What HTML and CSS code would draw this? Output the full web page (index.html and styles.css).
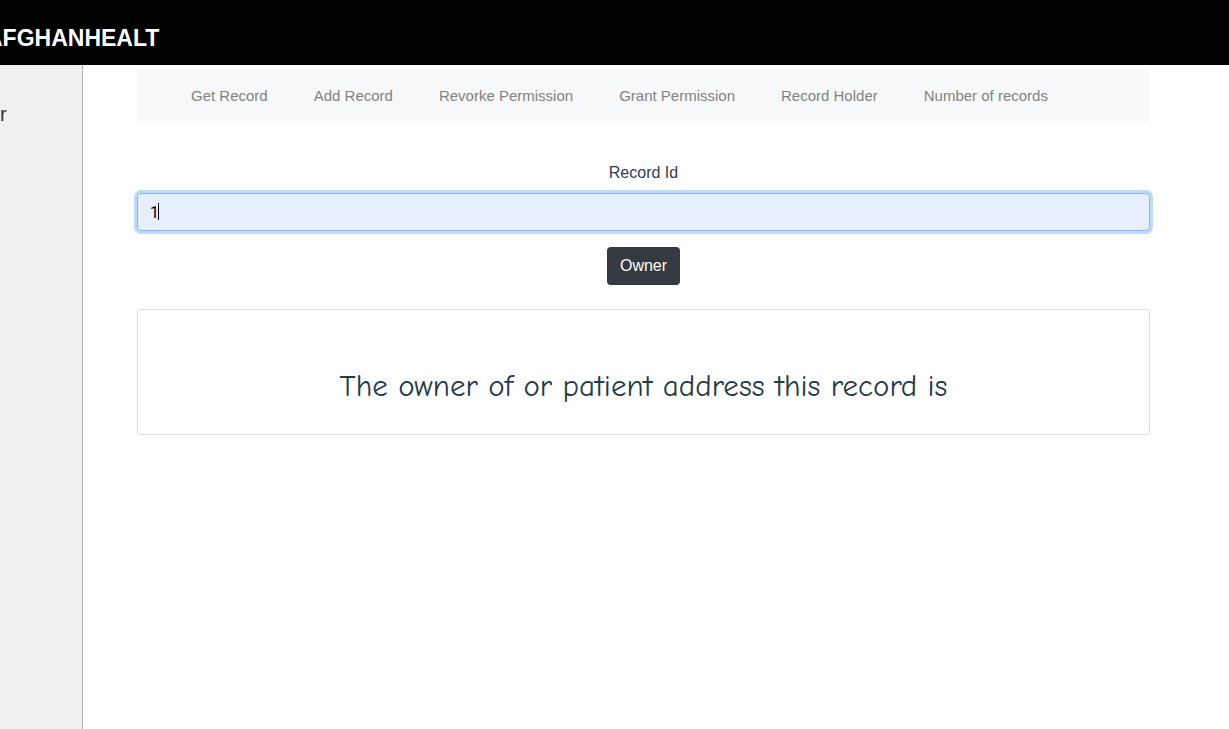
FILE: index.html
```html
<!DOCTYPE html>
<html lang="en">
<head>
<meta charset="utf-8">
<title>AFGHANHEALT</title>
<link rel="stylesheet" href="styles.css">
</head>
<body>
<header class="topbar"><span class="brand">AFGHANHEALT</span></header>
<div class="shell">
<aside class="sidebar"><span class="side-item">r</span></aside>
<main class="content">
<nav class="tabs">
<a href="#">Get Record</a>
<a href="#">Add Record</a>
<a href="#">Revorke Permission</a>
<a href="#">Grant Permission</a>
<a href="#">Record Holder</a>
<a href="#">Number of records</a>
</nav>
<form class="form">
<label for="record">Record Id</label>
<div class="field-wrap">
<input id="record" class="field" type="text" value="1">
<span class="caret"></span>
</div>
<button class="submit" type="button">Owner</button>
</form>
<section class="card"><p class="message">The owner of or patient address this record is</p></section>
</main>
</div>
</body>
</html>
```
FILE: styles.css
```css
* { box-sizing: border-box; }
body {
  margin: 0;
  min-height: 100vh;
  display: flex;
  flex-direction: column;
  overflow-x: hidden;
  background: #fff;
  color: #2c3e50;
  font: 16px/24px "Liberation Sans", Arial, sans-serif;
}
.topbar {
  display: flex;
  align-items: center;
  height: 65px;
  padding-top: 10px;
  background: #000;
  color: #fff;
}
.brand { margin-left: -14px; font-size: 23px; font-weight: 700; }
.shell { flex: 1; display: flex; }
.sidebar {
  flex: 0 0 83px;
  padding-top: 37px;
  background: #f1f1f1;
  border-right: 1px solid #b4b4b4;
  color: #333;
  font-size: 20px;
}
.content { flex: 1; padding: 4px 79px 0 54px; }
.tabs {
  display: flex;
  gap: 46px;
  height: 54px;
  padding: 0 54px;
  align-items: center;
  background: #f8f9fa;
  font-size: 15px;
}
.tabs a { color: #808284; text-decoration: none; white-space: nowrap; }
.form {
  display: flex;
  flex-direction: column;
  align-items: center;
  padding-top: 38px;
}
.field-wrap { position: relative; width: 100%; margin: 8px 0 16px; }
.field {
  display: block;
  width: 100%;
  height: 38px;
  padding: 6px 12px;
  border: 1px solid #80b9e8;
  border-radius: 4px;
  outline: 0;
  background: #e6effb;
  box-shadow: 0 0 0 3px #bcdcf8;
  color: #000;
  font: 16px Roboto, "Liberation Sans", sans-serif;
}
.caret {
  position: absolute;
  left: 21px;
  top: 10px;
  width: 1px;
  height: 17px;
  background: #000;
}
.submit {
  height: 38px;
  padding: 0 13px;
  border: 0;
  border-radius: 4px;
  background: #343a40;
  color: #fff;
  font: inherit;
}
.card {
  margin-top: 24px;
  padding: 56px 20px 28px;
  border: 1px solid #dfdfdf;
  border-radius: 4px;
}
.message {
  margin: 0;
  text-align: center;
  color: #263a48;
  font: 31px/40px "Comic Sans MS", "Comic Neue", cursive;
  font-variant-ligatures: none;
}
```
